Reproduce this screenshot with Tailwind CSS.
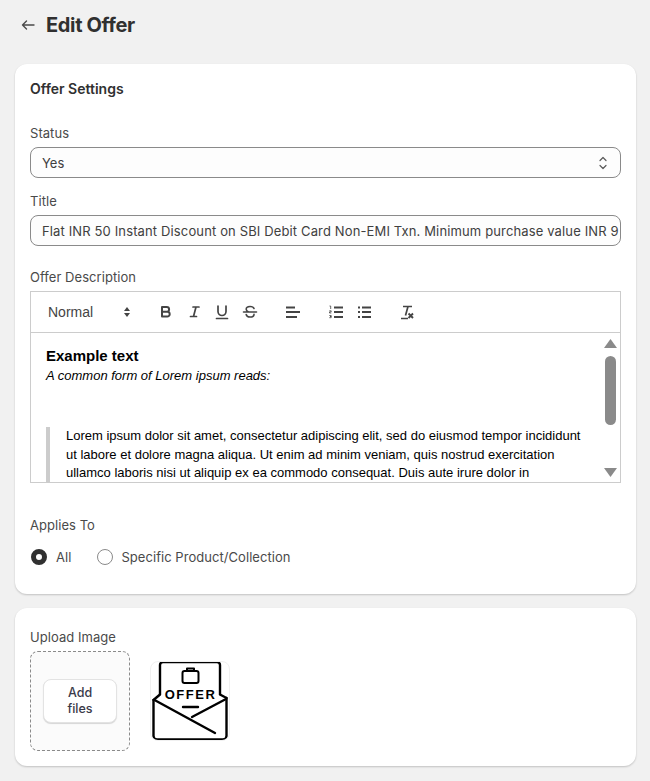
<!DOCTYPE html>
<html>
<head>
<meta charset="utf-8">
<script src="https://cdn.jsdelivr.net/npm/@tailwindcss/browser@4"></script>
</head>
<body class="bg-[#f1f1f1] font-['Inter',sans-serif] text-[13px] leading-[20px] text-[#303030] h-[781px] overflow-hidden">
<div class="pl-[15px] pr-[14px]">
  <div class="h-[64px] flex items-start pt-[13px] pl-[5px] gap-[10px]">
    <svg class="w-[16px] h-[16px] mt-[4px]" viewBox="0 0 16 16" fill="none" stroke="#4a4a4a" stroke-width="1.4" stroke-linecap="round" stroke-linejoin="round"><path d="M14 8H2.500M6.500 4 2.500 8l4 4"/></svg>
    <h1 class="text-[20px] leading-[24px] font-[650] tracking-[-0.35px] text-[#303030]">Edit Offer</h1>
  </div>

  <section class="bg-white rounded-[12px] h-[530px] px-[15px] pt-[15px] shadow-[0_1px_2px_rgba(0,0,0,0.2)]">
    <h2 class="text-[14px] leading-[20px] font-semibold">Offer Settings</h2>
    <div class="mt-[24px] text-[#4a4a4a] tracking-[0.05px]">Status</div>
    <div class="mt-[4px] h-[31px] rounded-[8px] border border-[#8a8a8a] bg-[#fdfdfd] flex items-center justify-between pl-[11px] pr-[11px] text-[#404040]">
      <span>Yes</span>
      <svg class="w-[12px] h-[16px]" viewBox="0 0 12 16" fill="none" stroke="#5a5a5a" stroke-width="1.200" stroke-linecap="round" stroke-linejoin="round"><path d="M3 5.500 6 2.500l3 3M3 10.500l3 3 3-3"/></svg>
    </div>
    <div class="mt-[13px] text-[#4a4a4a] tracking-[0.05px]">Title</div>
    <div class="mt-[4px] h-[31px] rounded-[8px] border border-[#8a8a8a] bg-[#fdfdfd] flex items-center pl-[11px] pr-[0px] overflow-hidden text-[#404040]">
      <span class="whitespace-nowrap tracking-[0.135px]">Flat INR 50 Instant Discount on SBI Debit Card Non-EMI Txn. Minimum purchase value INR 9</span>
    </div>
    <div class="mt-[21px] text-[#4a4a4a] tracking-[0.05px]">Offer Description</div>
    <div class="mt-[4px] h-[192px] border border-[#cccccc] font-['Liberation_Sans',sans-serif] text-black">
      <div class="h-[41px] border-b border-[#cccccc] flex items-center pl-[17px] text-[#444444]">
        <span class="w-[45px] text-[14px] leading-[20px]">Normal</span>
        <svg class="ml-[29px] w-[10px] h-[12px]" viewBox="0 0 10 12" fill="#444"><path d="M5 1 8 5H2zM5 11 2 7h6z"/></svg>
        <svg class="ml-[25px] w-[18px] h-[20px]" viewBox="0 0 18 20" fill="none" stroke="#444" stroke-width="2" stroke-linejoin="round"><path d="M5 5h4.700a2.400 2.400 0 0 1 0 4.800H5zM5 9.800h5.300a2.400 2.400 0 0 1 0 4.800H5z"/></svg>
        <svg class="ml-[11px] w-[18px] h-[20px]" viewBox="0 0 18 20" fill="none" stroke="#444" stroke-width="1.700" stroke-linecap="round"><path d="M7 5h6M4.500 14.500h6M10 5 7.500 14.500"/></svg>
        <svg class="ml-[9px] w-[18px] h-[20px]" viewBox="0 0 18 20" fill="none" stroke="#444" stroke-width="1.700" stroke-linecap="round"><path d="M5 4v5.500a4 4 0 0 0 8 0V4M3.500 16.500h11"/></svg>
        <svg class="ml-[10px] w-[18px] h-[20px]" viewBox="0 0 18 20" fill="none" stroke="#444" stroke-width="1.600" stroke-linecap="round"><path d="M2.500 10h13M13 6.500C12.500 5 11 4.500 9 4.500S5.200 5.500 5.200 7.200c0 1.300 1 2 2 2.500M5.200 12.500c.3 1.500 1.800 2.500 3.800 2.500s4-.8 4-2.600"/></svg>
        <svg class="ml-[25px] w-[18px] h-[20px]" viewBox="0 0 18 20" fill="none" stroke="#444" stroke-width="2"><path d="M2 5.500h9M2 10h14M2 15h11"/></svg>
        <svg class="ml-[25px] w-[18px] h-[20px]" viewBox="0 0 18 20" fill="none" stroke="#444"><path d="M7 5.500h9M7 10h9M7 15h9" stroke-width="2"/><path d="M2.500 4h1.200v3M2.300 8.800h1.900v1.100H2.500v1.100h1.800M2.300 13.500h1.900v1H3h1.200v1.200H2.300" stroke-width=".8"/></svg>
        <svg class="ml-[11px] w-[18px] h-[20px]" viewBox="0 0 18 20" fill="none" stroke="#444" stroke-width="2"><path d="M6 5.500h9M6 10h9M6 15h9M2 5.500h2M2 10h2M2 15h2"/></svg>
        <svg class="ml-[25px] w-[18px] h-[20px]" viewBox="0 0 18 20" fill="none" stroke="#444"><path d="M4 4.500h9M9 4.500 6.500 13.500M2 16.500h7" stroke-width="1.700"/><path d="M9.500 11.500l4.500 4.500M14 11.500 9.500 16" stroke-width="1.900"/></svg>
      </div>
      <div class="h-[149px] overflow-hidden relative pl-[15px] pt-[13px]">
        <div class="text-[15px] leading-[20px] font-bold">Example text</div>
        <div class="text-[13px] leading-[20px] italic">A common form of Lorem ipsum reads:</div>
        <div class="mt-[41px] border-l-[4px] border-[#cccccc] pl-[16px] w-[538px] h-[80px] text-[13px] leading-[18.500px]">
          <p class="whitespace-nowrap">Lorem ipsum dolor sit amet, consectetur adipiscing elit, sed do eiusmod tempor incididunt</p>
          <p class="whitespace-nowrap">ut labore et dolore magna aliqua. Ut enim ad minim veniam, quis nostrud exercitation</p>
          <p class="whitespace-nowrap">ullamco laboris nisi ut aliquip ex ea commodo consequat. Duis aute irure dolor in</p>
        </div>
        <svg class="absolute right-[3px] top-[6px] w-[13px] h-[9px]" viewBox="0 0 13 9" fill="#8a8a8a"><path d="M6.500 0 13 9H0z"/></svg>
        <div class="absolute right-[4px] top-[23px] w-[11px] h-[69px] rounded-full bg-[#8a8a8a]"></div>
        <svg class="absolute right-[3px] bottom-[5px] w-[13px] h-[9px]" viewBox="0 0 13 9" fill="#8a8a8a"><path d="M0 0h13L6.500 9z"/></svg>
      </div>
    </div>
    <div class="mt-[32px] text-[#4a4a4a] tracking-[0.05px]">Applies To</div>
    <div class="mt-[12px] flex items-center h-[20px] text-[#4a4a4a] tracking-[0.05px]">
      <span class="w-[16px] h-[16px] rounded-full border-[5px] border-[#303030] bg-white ml-[1px]"></span>
      <span class="ml-[9px]">All</span>
      <span class="w-[16px] h-[16px] rounded-full border border-[#8a8a8a] bg-white ml-[26px]"></span>
      <span class="ml-[8px]">Specific Product/Collection</span>
    </div>
  </section>

  <section class="mt-[14px] bg-white rounded-[12px] h-[158px] px-[15px] pt-[19px] shadow-[0_1px_2px_rgba(0,0,0,0.2)]">
    <div class="text-[#4a4a4a] tracking-[0.05px]">Upload Image</div>
    <div class="mt-[4px] flex items-start gap-[20px]">
      <div class="w-[100px] h-[100px] rounded-[8px] border border-dashed border-[#8a8a8a] bg-[#fbfbfb] flex items-center justify-center">
        <div class="w-[74px] h-[44px] rounded-[8px] bg-white border border-[#e3e3e3] shadow-[0_1px_1px_rgba(0,0,0,0.15)] flex items-center justify-center text-center font-medium leading-[16px] text-[12.500px] text-[#3a3a4a]">Add<br>files</div>
      </div>
      <div class="mt-[10px] w-[80px] h-[80px] rounded-[8px] border border-[#f0f0f0] bg-white relative overflow-hidden">
        <svg class="absolute left-[-1px] top-[-1px] w-[80px] h-[80px]" viewBox="0 0 80 80" fill="none" stroke="#000" stroke-width="2.400" stroke-linecap="round" stroke-linejoin="round">
          <path d="M10 33V4a3 3 0 0 1 3-3h54a3 3 0 0 1 3 3v29"/>
          <path d="M3.500 39 10 33.500M76.500 37 70 33.500"/>
          <path d="M3.500 39v36a3.500 3.500 0 0 0 3.500 3.500h66a3.500 3.500 0 0 0 3.500-3.500V37"/>
          <path d="M4.500 39l60.500 33M76 38 42 56"/>
          <path d="M33 46h15"/>
          <rect x="32.500" y="10" width="16" height="12" rx="2" stroke-width="2"/>
          <path d="M37 10V7.500h7V10" stroke-width="2"/>
          <text x="40.500" y="37.500" text-anchor="middle" font-family="Liberation Sans, sans-serif" font-weight="700" font-size="13" letter-spacing="1.500" fill="#000" stroke="none">OFFER</text>
        </svg>
      </div>
    </div>
  </section>
</div>
</body>
</html>
